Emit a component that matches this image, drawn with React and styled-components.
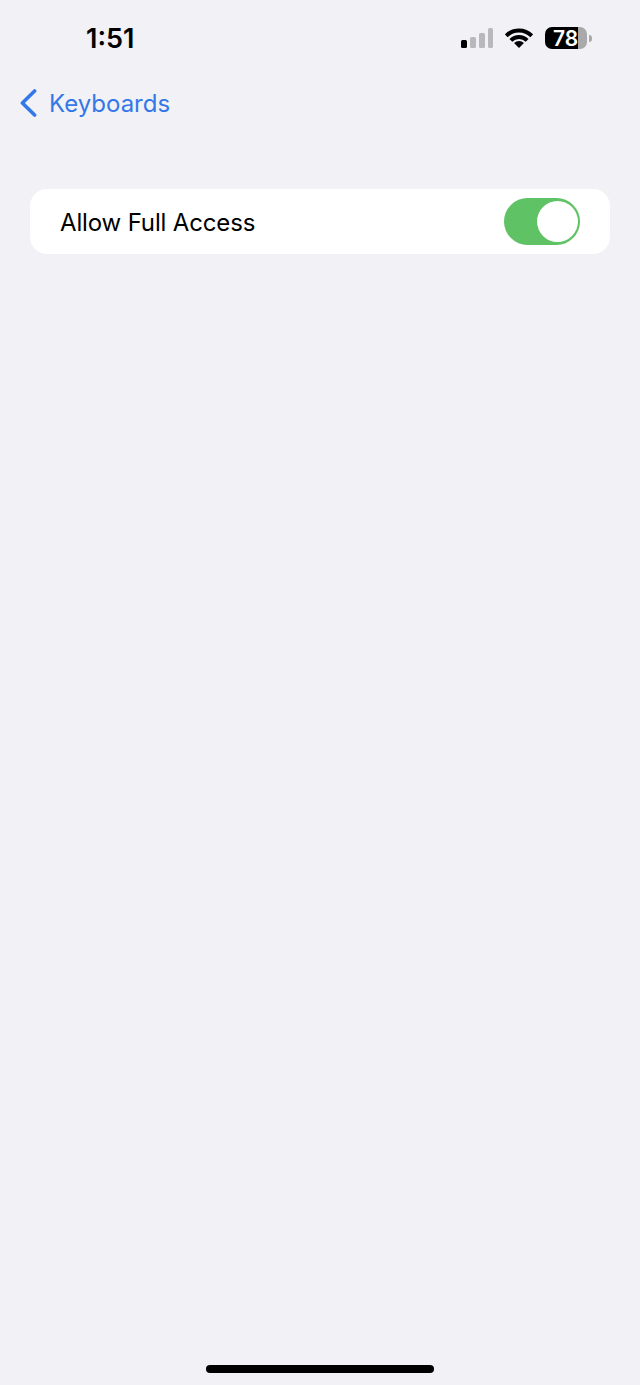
import React from "react";
import styled, { createGlobalStyle } from "styled-components";

const GlobalStyle = createGlobalStyle`
  body {
    margin: 0;
    background: #f1f1f6;
    font-family: "Inter", "Liberation Sans", sans-serif;
  }
`;

const Page = styled.div`
  width: 640px;
  height: 1385px;
  display: flex;
  flex-direction: column;
  overflow: hidden;
  background: #f1f1f6;
`;

const StatusBar = styled.header`
  height: 76px;
  box-sizing: border-box;
  padding: 0 48px 0 86px;
  display: flex;
  align-items: center;
  justify-content: space-between;
`;

const Time = styled.span`
  font-size: 27px;
  font-weight: 600;
  color: #000;
`;

const StatusIcons = styled.div`
  display: flex;
  align-items: center;
  gap: 12px;
`;

const BatteryWrap = styled.div`
  display: flex;
  align-items: center;
  gap: 2px;
`;

const Battery = styled.div`
  width: 42px;
  height: 22px;
  box-sizing: border-box;
  padding-left: 8px;
  border-radius: 7px;
  background: linear-gradient(to right, #000 0 79%, #a9a9ab 79% 100%);
  display: flex;
  align-items: center;
  font-size: 21px;
  font-weight: 600;
  color: #fff;
`;

const BatteryNub = styled.div`
  width: 3px;
  height: 7px;
  border-radius: 0 3px 3px 0;
  background: #a9a9ab;
`;

const NavBar = styled.nav`
  height: 54px;
  padding-left: 20px;
  display: flex;
  align-items: center;
  gap: 12px;
  color: #3478e8;
  font-size: 24px;
`;

const Card = styled.section`
  margin: 59px 30px 0;
  height: 65px;
  box-sizing: border-box;
  padding: 0 30px;
  border-radius: 17px;
  background: #fff;
  display: flex;
  align-items: center;
  justify-content: space-between;
`;

const Label = styled.span`
  padding-top: 2px;
  font-size: 24px;
  letter-spacing: -0.15px;
  color: #000;
`;

const Toggle = styled.div`
  width: 76px;
  height: 47px;
  box-sizing: border-box;
  padding: 0 2px;
  border-radius: 24px;
  background: #5fc264;
  display: flex;
  align-items: center;
  justify-content: flex-end;
`;

const Knob = styled.div`
  width: 41px;
  height: 41px;
  border-radius: 50%;
  background: #fff;
`;

const Spacer = styled.div`
  flex: 1;
`;

const HomeIndicator = styled.div`
  align-self: center;
  width: 228px;
  height: 8px;
  margin-bottom: 12px;
  border-radius: 4px;
  background: #000;
`;

const SignalIcon = () => (
  <svg width="32" height="20" viewBox="0 0 32 20">
    <rect x="0" y="12" width="6" height="8" rx="1.5" fill="#000" />
    <rect x="9" y="9" width="6" height="11" rx="1.5" fill="#b9b9bd" />
    <rect x="18" y="5" width="6" height="15" rx="1.5" fill="#b9b9bd" />
    <rect x="27" y="0" width="5" height="20" rx="1.5" fill="#b9b9bd" />
  </svg>
);

const WifiIcon = () => (
  <svg width="28" height="21" viewBox="0 0 28 21" fill="none">
    <path d="M1.27 7.77A18 18 0 0 1 26.73 7.77" stroke="#000" strokeWidth="4" />
    <path d="M5.87 12.37A11.5 11.5 0 0 1 22.13 12.37" stroke="#000" strokeWidth="4" />
    <path d="M14 20L9.05 15.05A7 7 0 0 1 18.95 15.05Z" fill="#000" />
  </svg>
);

const BackChevron = () => (
  <svg width="17" height="28" viewBox="0 0 17 28" fill="none">
    <path d="M14.6 2L2.4 14l12.2 12" stroke="#3478e8" strokeWidth="3.6" strokeLinecap="round" strokeLinejoin="round" />
  </svg>
);

const App = () => (
  <Page>
    <GlobalStyle />
    <StatusBar>
      <Time>1:51</Time>
      <StatusIcons>
        <SignalIcon />
        <WifiIcon />
        <BatteryWrap>
          <Battery>78</Battery>
          <BatteryNub />
        </BatteryWrap>
      </StatusIcons>
    </StatusBar>
    <NavBar>
      <BackChevron />
      Keyboards
    </NavBar>
    <Card>
      <Label>Allow Full Access</Label>
      <Toggle>
        <Knob />
      </Toggle>
    </Card>
    <Spacer />
    <HomeIndicator />
  </Page>
);

export default App;
